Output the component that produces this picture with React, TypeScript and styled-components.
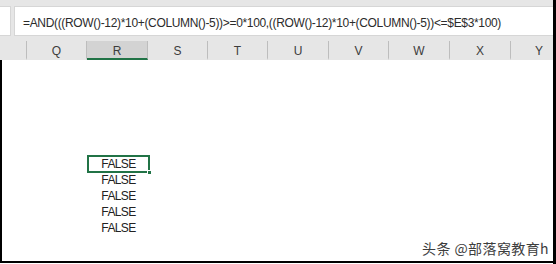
import React from "react";
import styled, { createGlobalStyle } from "styled-components";

const Global = createGlobalStyle`
  html, body { margin: 0; padding: 0; background: #ffffff; overflow: hidden; }
  * { box-sizing: border-box; }
`;

const COLS = [
  { label: "", w: 27 },
  { label: "Q", w: 60 },
  { label: "R", w: 61, selected: true },
  { label: "S", w: 60 },
  { label: "T", w: 60 },
  { label: "U", w: 61 },
  { label: "V", w: 60 },
  { label: "W", w: 61 },
  { label: "X", w: 61 },
  { label: "Y", w: 57 },
];

const template = COLS.map((c) => `${c.w}px`).join(" ");

const Frame = styled.div`
  position: relative;
  width: 556px;
  height: 264px;
  display: flex;
  flex-direction: column;
  overflow: hidden;
  background: #ffffff;
  font-family: "Liberation Sans", Arial, sans-serif;
  &::after {
    content: "";
    position: absolute;
    top: 0;
    right: 0;
    width: 3px;
    height: 100%;
    background: #000000;
  }
`;

const TopBar = styled.div`
  display: flex;
  gap: 3px;
  padding-top: 6px;
  height: 41px;
  flex: none;
  background: #e6e6e6;
`;

const NameBox = styled.div`
  width: 11px;
  height: 30px;
  background: #ffffff;
  border: 1px solid #d6d6d6;
  border-left: none;
`;

const FormulaBox = styled.div`
  flex: 1;
  height: 30px;
  background: #ffffff;
  border: 1px solid #d6d6d6;
  border-right: none;
  display: flex;
  align-items: center;
  padding: 3px 0 0 8px;
  font-size: 12px;
  letter-spacing: -0.33px;
  color: #2b2b2b;
  white-space: nowrap;
`;

const HeaderRow = styled.div`
  display: grid;
  grid-template-columns: ${template};
  height: 19px;
  flex: none;
  background: #e6e6e6;
`;

const ColHead = styled.div<{ $selected?: boolean }>`
  display: flex;
  align-items: center;
  justify-content: center;
  font-size: 12px;
  color: #3c3c3c;
  background: ${(p) => (p.$selected ? "#d3d3d3" : "transparent")};
  border-right: 1px solid #bdbdbd;
  border-bottom: 2px solid ${(p) => (p.$selected ? "#217346" : "transparent")};
  padding-top: 2px;
`;

const Sheet = styled.div`
  flex: 1;
  min-height: 0;
  overflow: hidden;
  background: #ffffff;
  border-left: 2px solid #000000;
  border-bottom: 2px solid #000000;
  margin-bottom: 1px;
  display: grid;
  grid-template-columns: ${template};
  grid-template-rows: repeat(12, 16px);
`;

const Cell = styled.div<{ $row: number; $active?: boolean }>`
  position: relative;
  grid-column: 3;
  grid-row: ${(p) => p.$row};
  display: flex;
  align-items: center;
  justify-content: center;
  font-size: 12px;
  letter-spacing: -0.6px;
  color: #222222;
  margin-left: -2px;
  ${(p) =>
    p.$active
      ? `border: 2px solid #217346; margin-top: -1px; margin-bottom: -1px;`
      : `border: 2px solid transparent;`}
`;

const Handle = styled.span`
  position: absolute;
  right: -4px;
  bottom: -4px;
  width: 5px;
  height: 5px;
  background: #217346;
  border: 1px solid #ffffff;
`;

const Watermark = styled.div`
  position: absolute;
  right: 7px;
  bottom: 6px;
  font-family: "Noto Sans CJK SC", "Liberation Sans", sans-serif;
  font-size: 14px;
  letter-spacing: 0.4px;
  color: #3d3d3d;
  text-shadow: 0 0 2px #fff;
`;

const rows = [7, 8, 9, 10, 11];

export default function App() {
  return (
    <>
      <Global />
      <Frame>
        <TopBar>
          <NameBox />
          <FormulaBox>
            =AND(((ROW()-12)*10+(COLUMN()-5))&gt;=0*100,((ROW()-12)*10+(COLUMN()-5))&lt;=$E$3*100)
          </FormulaBox>
        </TopBar>
        <HeaderRow>
          {COLS.map((c, i) => (
            <ColHead key={i} $selected={c.selected}>
              {c.label}
            </ColHead>
          ))}
        </HeaderRow>
        <Sheet>
          {rows.map((r, i) => (
            <Cell key={r} $row={r} $active={i === 0}>
              FALSE
              {i === 0 && <Handle />}
            </Cell>
          ))}
        </Sheet>
        <Watermark>头条 @部落窝教育h</Watermark>
      </Frame>
    </>
  );
}
